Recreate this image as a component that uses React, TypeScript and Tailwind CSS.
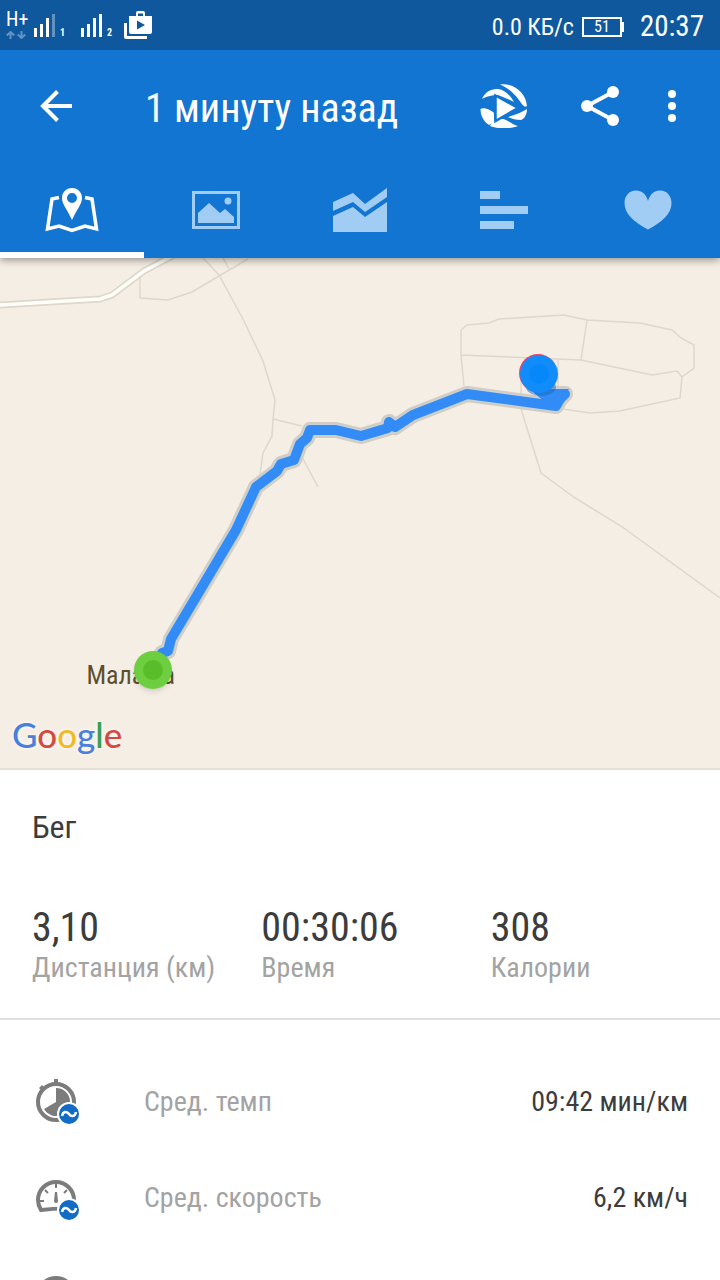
import type { ReactNode } from "react";

function BackIcon() {
  return (
    <svg width="32" height="32" viewBox="0 0 32 32" fill="none" stroke="#fff" strokeWidth="4">
      <path d="M32 16H4M17.5 1.5 3 16l14.500 14.500" />
    </svg>
  );
}

function FlybyIcon() {
  return (
    <svg width="48" height="44" viewBox="0 0 48 44" fill="#fff">
      <path d="M20 0.500C34 -1.500 46 9 47 22C44 24 42 20 39 16C34 9 28 4 20 0.500Z" />
      <path d="M2 15C5 8 11 4.500 18 5C25 6 30 11 34 18L30 16L18 11C12 11 5 13 2 15Z" />
      <path d="M0.500 25C4 23 11 26 14 29V38L9 41C3 37 0.500 31 0.500 25Z" />
      <path d="M10 42C13 36 18 34 23 35C28 36 33 41 38 42C30 45 18 45 10 42Z" />
      <path d="M28 33C35 31 42 28 47 25C47 31 44 35 41 36C36 36 32 35 28 33Z" />
      <path d="M15.500 11.500V37L38 24Z" stroke="#1275d1" strokeWidth="2.500" />
    </svg>
  );
}

function ShareIcon() {
  return (
    <svg width="40" height="40" viewBox="0 0 40 40" fill="#fff">
      <path d="M33 6 7 20l26 14" fill="none" stroke="#fff" strokeWidth="4" />
      <circle cx="33" cy="6" r="6" />
      <circle cx="7" cy="20" r="6" />
      <circle cx="33" cy="34" r="6" />
    </svg>
  );
}

function MoreIcon() {
  return (
    <svg width="8" height="32" viewBox="0 0 8 32" fill="#fff">
      <circle cx="4" cy="4" r="4" />
      <circle cx="4" cy="16" r="4" />
      <circle cx="4" cy="28" r="4" />
    </svg>
  );
}

function Signal({ sim, bars }: { sim: number; bars: number }) {
  return (
    <div className="flex items-end text-white">
      <svg width="22" height="24" viewBox="0 0 22 24" fill="currentColor">
        <rect x="0" y="15" width="3" height="9" />
        <rect x="6" y="11" width="3" height="13" />
        <rect x="12" y="5" width="3" height="19" />
        <rect x="18" y="1" width="3" height="23" opacity={bars === 4 ? 1 : 0.35} />
      </svg>
      <span className="ml-1 text-[10px] leading-2 font-bold">{sim}</span>
    </div>
  );
}

function StatusBar() {
  return (
    <div className="flex h-[50px] items-center bg-[#0f589d] pr-4 pl-1.5 text-white">
      <div className="w-7">
        <div className="text-xl leading-4">H+</div>
        <svg className="mt-1" width="20" height="8" viewBox="0 0 20 8" fill="none" stroke="#5f93c8" strokeWidth="2">
          <path d="M4.500 8V1.500M0.700 4.500 4.500 1l3.800 3.500M15.500 0v6.500M11.700 3.500l3.800 3.500 3.800-3.500" />
        </svg>
      </div>
      <Signal sim={1} bars={3} />
      <div className="w-4" />
      <Signal sim={2} bars={4} />
      <svg className="ml-3" width="28" height="28" viewBox="0 0 28 28" fill="#fff">
        <path d="M0 12h3v13h20v3H2q-2 0-2-2z" />
        <path fillRule="evenodd" d="M5 5h7V2q0-2 2-2h5q2 0 2 2v3h7v16q0 2-2 2H7q-2 0-2-2zM14 5h5V2.500h-5zM13 9.500v9l8-4.500z" />
      </svg>
      <div className="ml-auto flex items-center pt-1">
        <span className="text-2xl">0.0 КБ/с</span>
        <div className="ml-2 flex h-5 w-10 items-center justify-center border-2 border-white text-base">51</div>
        <div className="h-2.5 w-0.5 bg-white" />
        <span className="ml-4 text-[29px]">20:37</span>
      </div>
    </div>
  );
}

const tabs: { name: string; icon: ReactNode }[] = [
  {
    name: "Карта",
    icon: (
      <svg width="54" height="46" viewBox="0 0 54 46" fill="#fff">
        <path d="M14 10.500 7 12 2.500 42 14 39l13 4.500L40 39l11.500 3L47 12l-7-1.500" fill="none" stroke="#fff" strokeWidth="3.500" />
        <path fillRule="evenodd" d="M27 1C21 1 17 5.500 17 11C17 17 22 22 27 33C32 22 37 17 37 11C37 5.500 33 1 27 1ZM27 6a5 5 0 1 1 0 10a5 5 0 1 1 0-10Z" />
      </svg>
    ),
  },
  {
    name: "Фото",
    icon: (
      <svg width="48" height="38" viewBox="0 0 48 38" fill="#a1cdf5">
        <path fillRule="evenodd" d="M0 0h48v38H0zM3 3v32h42V3z" />
        <path d="M6 22 17 12l11 10 5-4 9 8v6H6z" />
        <circle cx="36" cy="10" r="3.500" />
      </svg>
    ),
  },
  {
    name: "График",
    icon: (
      <svg width="54" height="44" viewBox="0 0 54 44" fill="#a1cdf5">
        <path d="M0 14 20 5l12 11L54 0v9L32 24 20 14 0 23z" />
        <path d="M0 28 20 19l12 10 22-15v30H0z" />
      </svg>
    ),
  },
  {
    name: "Круги",
    icon: (
      <svg width="48" height="38" viewBox="0 0 48 38" fill="#a1cdf5">
        <path d="M0 0h20v8H0zM0 15h48v8H0zM0 30h34v8H0z" />
      </svg>
    ),
  },
  {
    name: "Пульс",
    icon: (
      <svg width="48" height="40" viewBox="0 0 48 40" fill="#a1cdf5">
        <path d="M24 11C22 4 18 0.500 12 0.500C5 0.500 0.500 6 0.500 13C0.500 24 10 32 24 39.500C38 32 47.500 24 47.500 13C47.500 6 43 0.500 36 0.500C30 0.500 26 4 24 11Z" />
      </svg>
    ),
  },
];

const track =
  "M153 671 162 653 168 651 171 639 236 530 256 487 277 471 281 464 294 460 300 444 307 438 310 430 336 430 361 436 388 428 389 422 395 427 413 415 467 394 556 406 560 399 565 394 545 394";

function RouteMap() {
  return (
    <section className="relative border-b-2 border-[#e5e0d6] bg-[#f5eee4]">
      <svg className="block w-full" viewBox="0 258 720 510">
        <g fill="none" stroke="#ddd7cc" strokeWidth="1.500">
          <path d="M0 305 100 299 112 295 144 271 178 253" strokeWidth="7" />
          <path d="M0 305 100 299 112 295 144 271 178 253" stroke="#fffef9" strokeWidth="3.500" />
          <path d="M140 276V298L168 300 192 292 219 276 248 259M203 258 219 275 244 321 263 361 275 400 273 419 272 436 263 453 260 474M223 258 229 269M273 419 302 426M302 457 318 487" />
          <path d="M464 386 461 355V330L467 325 489 323 499 319 564 315 587 320 640 323 672 330 681 338 694 345V368L682 377 680 398 620 411 590 413 563 409M461 355 581 360 652 375 677 371 682 377M587 320 581 360M521 372V409L541 473 575 498 621 526 720 598M558 360V390" />
        </g>
        <path d={track} fill="none" stroke="#d2cdc2" strokeWidth="16" strokeLinejoin="round" strokeLinecap="round" />
        <path d={track} fill="none" stroke="#c8d2dc" strokeWidth="12" strokeLinejoin="round" strokeLinecap="round" />
        <path d={track} fill="none" stroke="#338cf6" strokeWidth="10" strokeLinejoin="round" strokeLinecap="round" />
        <path d="M530 389 569 389 556 409 540 398Z" fill="#338cf6" />
        <ellipse cx="541" cy="387" rx="15" ry="9" fill="#1c65b8" opacity="0.500" />
        <circle cx="538" cy="373" r="19" fill="#f0436c" />
        <circle cx="539" cy="374" r="19" fill="#128cfb" />
        <circle cx="539" cy="374" r="10" fill="#0788fa" />
      </svg>
      <span className="absolute top-[78%] left-[12%] text-[26px] text-[#5c4f2a]">Малаша</span>
      <div className="absolute top-[77%] left-[18.600%] flex size-[38px] items-center justify-center rounded-full bg-[#6dcf40] shadow-md">
        <div className="size-5 rounded-full bg-[#58bd28]" />
      </div>
      <div className="absolute bottom-3 left-3 font-[Lato] text-[35px] leading-11 font-medium [text-shadow:0_0_4px_#fff]">
        <span className="text-[#4a80dc]">G</span>
        <span className="text-[#d34a40]">o</span>
        <span className="text-[#eebb25]">o</span>
        <span className="text-[#4a80dc]">g</span>
        <span className="text-[#3b9e55]">l</span>
        <span className="text-[#d34a40]">e</span>
      </div>
    </section>
  );
}

function AverageBadge() {
  return (
    <>
      <circle cx="33" cy="35" r="12" fill="#fff" />
      <circle cx="33" cy="35" r="10" fill="#126bc5" />
      <path d="M26 37C27 32 31 32 33 35S39 38 40 33" fill="none" stroke="#fff" strokeWidth="2.500" />
    </>
  );
}

function PaceIcon() {
  return (
    <svg width="44" height="46" viewBox="0 0 44 46">
      <circle cx="20" cy="23" r="18" fill="none" stroke="#7c7c7c" strokeWidth="4" />
      <path d="M18 0h4v5h-4zM3 9l3-3 3 3-3 3z" fill="#7c7c7c" />
      <path d="M20 23V9A14 14 0 1 1 8 30Z" fill="#7c7c7c" />
      <AverageBadge />
    </svg>
  );
}

function SpeedIcon() {
  return (
    <svg width="44" height="46" viewBox="0 0 44 46">
      <path d="M30 33.500Q17 33.500 5 35Q2 30 2 25A18 18 0 0 1 38 25" fill="none" stroke="#7c7c7c" strokeWidth="4" />
      <path d="M4 26h4M9 15l3 3M20 9v4M31 15l-3 3M32 26h4" stroke="#7c7c7c" strokeWidth="2" />
      <path d="M19 17h2l1 9a2 2 0 1 1-4 0z" fill="#7c7c7c" />
      <AverageBadge />
    </svg>
  );
}

function HeightIcon() {
  return (
    <svg width="44" height="46" viewBox="0 0 44 46">
      <circle cx="20" cy="25" r="18" fill="none" stroke="#7c7c7c" strokeWidth="4" />
    </svg>
  );
}

const stats = [
  { value: "3,10", label: "Дистанция (км)" },
  { value: "00:30:06", label: "Время" },
  { value: "308", label: "Калории" },
];

const rows = [
  { icon: <PaceIcon />, label: "Сред. темп", value: "09:42 мин/км" },
  { icon: <SpeedIcon />, label: "Сред. скорость", value: "6,2 км/ч" },
  { icon: <HeightIcon />, label: "", value: "" },
];

export default function App() {
  return (
    <div className="h-screen overflow-hidden bg-white font-['Roboto_Condensed',Roboto,sans-serif] text-[#3c3c3c]">
      <header className="relative z-10 bg-[#1275d1] shadow-[0_2px_8px_rgba(0,0,0,0.400)]">
        <StatusBar />
        <div className="flex h-28 items-center pr-11 pl-10 text-white">
          <button aria-label="Назад">
            <BackIcon />
          </button>
          <h1 className="ml-[73px] flex-1 pt-1.5 text-[40px]">1 минуту назад</h1>
          <div className="flex items-center">
            <button aria-label="Пролёт">
              <FlybyIcon />
            </button>
            <button aria-label="Поделиться" className="ml-[52px]">
              <ShareIcon />
            </button>
            <button aria-label="Ещё" className="ml-12">
              <MoreIcon />
            </button>
          </div>
        </div>
        <nav className="grid h-24 grid-cols-5">
          {tabs.map((tab, i) => (
            <button
              key={tab.name}
              aria-label={tab.name}
              className={
                i === 0
                  ? "flex items-center justify-center border-b-6 border-white pt-1.5"
                  : "flex items-center justify-center border-b-6 border-transparent pt-1.5"
              }
            >
              {tab.icon}
            </button>
          ))}
        </nav>
      </header>

      <RouteMap />

      <section className="border-b-2 border-[#dedede] px-8 py-8">
        <h2 className="text-[32px] leading-[50px]">Бег</h2>
        <div className="-mr-8 grid grid-cols-3 pt-[52px]">
          {stats.map((stat) => (
            <div key={stat.label}>
              <div className="text-[40px] leading-12">{stat.value}</div>
              <div className="text-[28px] leading-8 text-[#a3a3a3]">{stat.label}</div>
            </div>
          ))}
        </div>
        <div className="h-0.5" />
      </section>

      <section className="pt-[34px]">
        {rows.map((row, i) => (
          <div key={i} className="flex h-24 items-center px-8 text-[28px]">
            <div className="w-28 pl-1">{row.icon}</div>
            <span className="flex-1 text-[#a3a3a3]">{row.label}</span>
            <span>{row.value}</span>
          </div>
        ))}
      </section>
    </div>
  );
}
